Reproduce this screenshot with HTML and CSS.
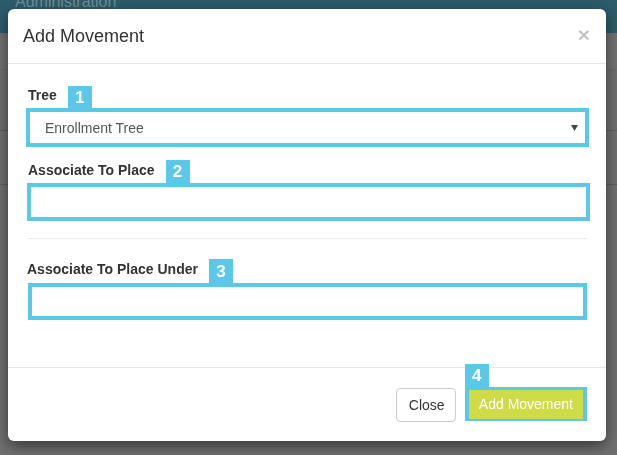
FILE: index.html
```html
<!DOCTYPE html>
<html>
<head>
<meta charset="utf-8">
<link rel="stylesheet" href="styles.css">
</head>
<body>
<div class="page">
  <div class="topbar"><span class="brand">Administration</span></div>
  <div class="subbar"></div>
  <div class="band"></div>
  <div class="band band2"></div>
</div>
<div class="overlay">
  <div class="modal">
    <div class="modal-header">
      <h4 class="modal-title">Add Movement</h4>
      <span class="close">&times;</span>
    </div>
    <div class="modal-body">
      <div class="group">
        <div class="label-row"><label class="lbl">Tree</label><span class="badge">1</span></div>
        <div class="box select-box"><span class="select-text">Enrollment Tree</span>
          <svg class="caret" width="7" height="6" viewBox="0 0 7 6"><path d="M0 0H7L3.5 6Z" fill="#444"/></svg>
        </div>
      </div>
      <div class="group g2">
        <div class="label-row"><label class="lbl">Associate To Place</label><span class="badge">2</span></div>
        <div class="box"></div>
      </div>
      <hr class="sep">
      <div class="group g3">
        <div class="label-row"><label class="lbl">Associate To Place Under</label><span class="badge">3</span></div>
        <div class="box"></div>
      </div>
    </div>
    <div class="modal-footer">
      <button class="btn btn-default">Close</button>
      <div class="primary-wrap">
        <span class="badge badge4">4</span>
        <div class="hl"><button class="btn btn-lime">Add Movement</button></div>
      </div>
    </div>
  </div>
</div>
</body>
</html>
```

FILE: styles.css
```css
html, body {
  margin: 0;
  padding: 0;
  height: 100%;
}
body {
  font-family: "Liberation Sans", Arial, sans-serif;
  font-size: 14px;
  color: #333;
  background: #707070;
  overflow: hidden;
}
.page {
  height: 455px;
  background: #707070;
}
.topbar {
  height: 33px;
  background: #2d5c6c;
  overflow: hidden;
}
.brand {
  display: block;
  padding-left: 15px;
  font-size: 16px;
  line-height: 16px;
  margin-top: -6px;
  color: #6f8e98;
}
.subbar {
  height: 36px;
  border-bottom: 1px solid #6a6a6a;
  background: #727272;
}
.band {
  height: 60px;
  border-bottom: 1px solid #5f5f5f;
}
.band2 {
  height: 53px;
}
.overlay {
  position: fixed;
  inset: 0;
  padding: 9px 11px 0 8px;
}
.modal {
  width: 598px;
  height: 432px;
  background: #fff;
  border-radius: 6px;
  box-shadow: 0 5px 15px rgba(0, 0, 0, 0.5);
  display: flex;
  flex-direction: column;
  box-sizing: border-box;
}
.modal-header {
  display: flex;
  align-items: flex-start;
  justify-content: space-between;
  padding: 15px;
  height: 55px;
  box-sizing: border-box;
  border-bottom: 1px solid #e5e5e5;
}
.modal-title {
  margin: 0;
  font-size: 18px;
  font-weight: normal;
  line-height: 24px;
  color: #333;
}
.close {
  font-size: 21px;
  font-weight: bold;
  line-height: 1;
  color: #c6c6c6;
  margin-right: 1px;
}
.modal-body {
  flex: 1;
  padding: 21px 17px 0 19px;
}
.label-row {
  display: flex;
  align-items: flex-end;
  gap: 11px;
}
.lbl {
  font-weight: bold;
  font-size: 14px;
  line-height: 20px;
  padding-bottom: 3px;
  padding-left: 1px;
  color: #333;
}
.badge {
  display: flex;
  align-items: center;
  justify-content: center;
  width: 24px;
  height: 22px;
  background: #5bc8e9;
  color: #fff;
  font-weight: bold;
  font-size: 17px;
  line-height: 1;
}
.box {
  height: 39px;
  border: 4px solid #5bc8e9;
  box-sizing: border-box;
  background: #fff;
}
.select-box {
  display: flex;
  align-items: center;
  justify-content: space-between;
  padding: 0 7px 0 15px;
  margin-left: -1px;
}
.select-text {
  color: #555;
  font-size: 14px;
}
.caret {
  display: block;
}
.g2 {
  margin-top: 13px;
}
.g2 .badge {
  height: 23px;
}
.g2 .box {
  height: 38px;
  margin-right: -1px;
}
.sep {
  border: 0;
  border-top: 1px solid #eaeaea;
  margin: 17px 2px 0 1px;
  height: 0;
}
.g3 {
  margin-top: 20px;
}
.g3 .lbl {
  padding-left: 0;
  padding-bottom: 4px;
}
.g3 .badge {
  height: 24px;
}
.g3 .box {
  height: 37px;
  margin-left: 1px;
  margin-right: 2px;
}
.modal-footer {
  display: flex;
  justify-content: flex-end;
  align-items: flex-end;
  gap: 9px;
  height: 74px;
  box-sizing: border-box;
  border-top: 1px solid #e5e5e5;
  padding: 0 19px 19px 0;
}
.btn {
  font-family: "Liberation Sans", Arial, sans-serif;
  font-size: 14px;
  line-height: 20px;
  border-radius: 4px;
  cursor: pointer;
  white-space: nowrap;
}
.btn-default {
  background: #fff;
  border: 1px solid #ccc;
  color: #333;
  padding: 6px 12px;
  height: 34px;
  width: 60px;
}
.primary-wrap {
  display: flex;
  flex-direction: column;
  align-items: flex-start;
  margin-top: -5px;
  margin-bottom: 1px;
}
.badge4 {
  height: 23px;
}
.hl {
  border: 4px solid #5bc8e9;
  border-top-width: 3px;
  border-bottom-width: 2px;
  background: #5bc8e9;
}
.btn-lime {
  display: block;
  background: #cfdb48;
  border: 0;
  border-radius: 0;
  color: #fff;
  padding: 4px 10px 5px;
  height: 29px;
}
```
